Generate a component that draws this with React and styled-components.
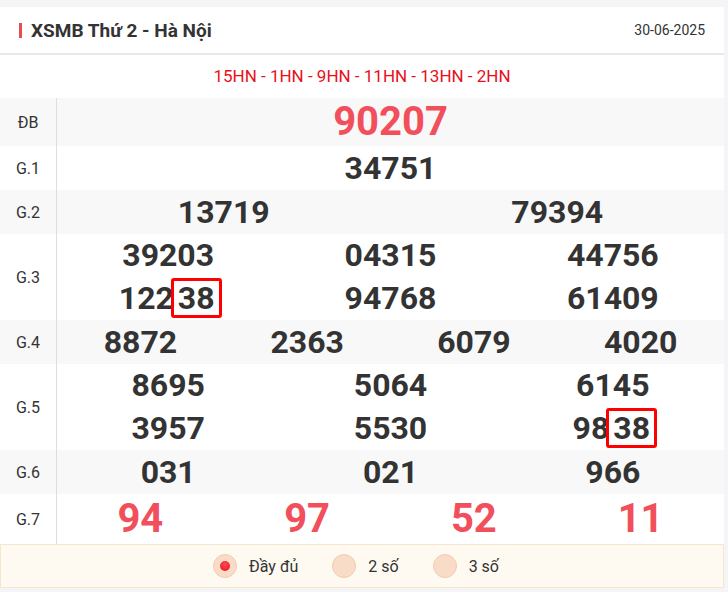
import React from "react";
import styled, { createGlobalStyle } from "styled-components";

const GlobalStyle = createGlobalStyle`
    body {
        margin: 0;
        background: #f5f5f7;
        font-family: Roboto, "Liberation Sans", sans-serif;
        color: #333;
    }
`;

const Card = styled.div`
    width: 724px;
    margin-top: 7px;
    background: #fff;
`;

const Header = styled.div`
    display: flex;
    align-items: center;
    justify-content: space-between;
    height: 46px;
    padding: 0 19px;
    border-bottom: 2px solid #ebe7e8;
`;

const Title = styled.h2`
    display: flex;
    align-items: center;
    margin: 0;
    font-size: 19px;
    font-weight: 700;
    color: #333;
    &::before {
        content: "";
        width: 3px;
        height: 15px;
        margin-right: 9px;
        background: #e84c50;
    }
`;

const DateText = styled.span`
    font-size: 14px;
    color: #333;
`;

const Codes = styled.div`
    height: 43px;
    line-height: 43px;
    text-align: center;
    font-size: 17px;
    color: #e8101a;
`;

const Row = styled.div`
    display: flex;
    background: ${(p) => (p.$gray ? "#f8f8f8" : "#fff")};
`;

const Label = styled.div`
    display: flex;
    align-items: center;
    justify-content: center;
    width: 56px;
    flex-shrink: 0;
    border-right: 1px solid #dedede;
    font-size: 16px;
    color: #333;
`;

const Cells = styled.div`
    flex: 1;
    display: grid;
    grid-template-columns: repeat(${(p) => p.$cols}, 1fr);
`;

const Num = styled.div`
    text-align: center;
    font-weight: 700;
    font-size: ${(p) => (p.$big ? "40px" : "32px")};
    line-height: ${(p) => p.$lh || "43px"};
    color: ${(p) => (p.$red ? "#f14f5b" : "#333")};
`;

const Mark = styled.span`
    display: inline-block;
    border: 3px solid #f00;
    border-radius: 3px;
    padding: 0 4px;
    margin: 0 -4px 0 -3px;
    line-height: 34px;
`;

const Footer = styled.div`
    display: flex;
    justify-content: center;
    align-items: center;
    gap: 34px;
    height: 42px;
    padding-right: 12px;
    background: #fffaf1;
    border: 1px solid #f5e6cf;
`;

const Option = styled.label`
    display: flex;
    align-items: center;
    gap: 12px;
    font-size: 16px;
    color: #333;
`;

const Radio = styled.span`
    display: flex;
    align-items: center;
    justify-content: center;
    width: 22px;
    height: 22px;
    border-radius: 50%;
    background: #f9dcc8;
    border: 1px solid #f1ccb0;
    &::after {
        content: "";
        display: ${(p) => (p.$on ? "block" : "none")};
        width: 10px;
        height: 10px;
        border-radius: 50%;
        background: radial-gradient(circle at 50% 35%, #ff4a55, #e5121f);
    }
`;

const renderNum = (n, mark) => {
    if (!mark) return n;
    return (
        <>
            {n.slice(0, n.length - 2)}
            <Mark>{n.slice(-2)}</Mark>
        </>
    );
};

const rows = [
    { label: "ĐB", cols: 1, nums: ["90207"], red: true, big: true, lh: "48px", gray: true },
    { label: "G.1", cols: 1, nums: ["34751"], lh: "44px" },
    { label: "G.2", cols: 2, nums: ["13719", "79394"], lh: "44px", gray: true },
    { label: "G.3", cols: 3, nums: ["39203", "04315", "44756", "12238", "94768", "61409"], marks: [3] },
    { label: "G.4", cols: 4, nums: ["8872", "2363", "6079", "4020"], lh: "44px", gray: true },
    { label: "G.5", cols: 3, nums: ["8695", "5064", "6145", "3957", "5530", "9838"], marks: [5] },
    { label: "G.6", cols: 3, nums: ["031", "021", "966"], lh: "44px", gray: true },
    { label: "G.7", cols: 4, nums: ["94", "97", "52", "11"], red: true, big: true, lh: "50px" },
];

const App = () => {
    return (
        <>
            <GlobalStyle />
            <Card>
                <Header>
                    <Title>XSMB Thứ 2 - Hà Nội</Title>
                    <DateText>30-06-2025</DateText>
                </Header>
                <Codes>15HN - 1HN - 9HN - 11HN - 13HN - 2HN</Codes>
                {rows.map((r) => (
                    <Row key={r.label} $gray={r.gray}>
                        <Label>{r.label}</Label>
                        <Cells $cols={r.cols}>
                            {r.nums.map((n, i) => (
                                <Num key={i} $red={r.red} $big={r.big} $lh={r.lh}>
                                    {renderNum(n, r.marks && r.marks.includes(i))}
                                </Num>
                            ))}
                        </Cells>
                    </Row>
                ))}
                <Footer>
                    <Option>
                        <Radio $on />
                        Đầy đủ
                    </Option>
                    <Option>
                        <Radio />2 số
                    </Option>
                    <Option>
                        <Radio />3 số
                    </Option>
                </Footer>
            </Card>
        </>
    );
};

export default App;
